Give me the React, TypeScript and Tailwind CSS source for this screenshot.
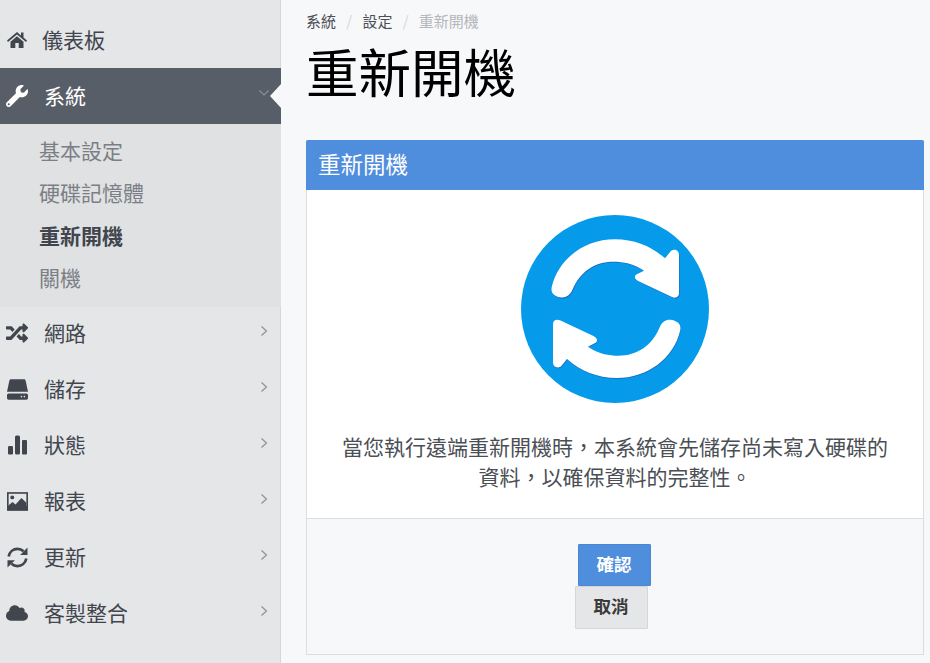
import { ReactNode } from 'react'
import { FaWrench, FaRandom, FaCloud } from 'react-icons/fa'

function HomeIcon() {
  return (
    <svg viewBox="0 0 20 16" className="w-[20px] h-[16px]" fill="currentColor">
      <path d="M10 0 L0 8.5 L1 10 L10 2.5 L19 10 L20 8.5 L16.5 5.5 V0.5 H14 V3.4 Z" />
      <path d="M3.5 9.8 L10 4.2 L16.5 9.8 V16 H11.7 V11 H8.3 V16 H3.5 Z" />
    </svg>
  )
}

function BarsIcon() {
  return (
    <svg viewBox="0 0 22 20" className="w-[22px] h-[20px]" fill="currentColor">
      <rect x="2" y="11" width="5" height="8.5" rx="1.2" />
      <rect x="9" y="0.5" width="5" height="19" rx="1.5" />
      <rect x="16" y="5" width="5" height="14.5" rx="1" />
    </svg>
  )
}

function HddIcon() {
  return (
    <svg viewBox="0 0 64 62" className="w-[21px] h-[21px]" fill="currentColor">
      <path d="M12 0 H52 C55 0 56 2 57 5 L64 38 H0 L7 5 C8 2 9 0 12 0 Z" />
      <rect y="43" width="64" height="19" rx="5" />
      <circle cx="44" cy="52.5" r="2.5" fill="#e5e6e8" />
      <circle cx="53" cy="52.5" r="2.5" fill="#e5e6e8" />
    </svg>
  )
}

function PictureIcon() {
  return (
    <svg viewBox="0 0 64 57" className="w-[21px] h-[19px]" fill="currentColor">
      <rect width="64" height="57" />
      <rect x="5" y="5" width="54" height="37" fill="#e5e6e8" />
      <circle cx="16" cy="16" r="6" />
      <path d="M5 52 V40 L17 30 L26 38 L44 18 L59 32 V52 Z" />
    </svg>
  )
}

function RefreshIcon() {
  return (
    <svg viewBox="0 0 20 20" className="w-[21px] h-[21px]" fill="currentColor">
      <path d="M1.6 9 C2.4 4.6 6 1.8 10 1.8 C12.2 1.8 14.2 2.6 15.8 4" fill="none" stroke="currentColor" strokeWidth="2.6" />
      <path d="M19.5 0.5 V7.5 H12.5 Z" />
      <path d="M18.4 11 C17.6 15.4 14 18.2 10 18.2 C7.8 18.2 5.8 17.4 4.2 16" fill="none" stroke="currentColor" strokeWidth="2.6" />
      <path d="M0.5 19.5 V12.5 H7.5 Z" />
    </svg>
  )
}

function Chevron({ down }: { down?: boolean }) {
  return (
    <svg viewBox="0 0 10 12" className="w-[10px] h-[12px]" fill="none" stroke="currentColor" strokeWidth="1.1">
      {down ? <path d="M0.5 3.5 L5 8 L9.5 3.5" /> : <path d="M2.5 1.5 L7.5 6 L2.5 10.5" />}
    </svg>
  )
}

function NavItem({ icon, label, active, open, plain }: { icon: ReactNode; label: string; active?: boolean; open?: boolean; plain?: boolean }) {
  return (
    <div className={`relative h-[56px] flex items-center pl-[6px] pr-[12px] text-[21px] ${active ? 'bg-[#585e67] text-white' : 'text-[#41454d]'}`}>
      <span className="w-[22px] flex justify-center text-[21px]">{icon}</span>
      <span className={`flex-1 -mt-[1px] ${plain ? 'ml-[14px]' : 'ml-[16px]'}`}>{label}</span>
      {!plain && (
        <span className={active ? '-mt-[6px] text-[#8b9099]' : '-mt-[4px] text-[#8a8d92]'}>
          <Chevron down={open} />
        </span>
      )}
      {active && (
        <span className="absolute right-0 top-[16px] w-0 h-0 border-y-[12px] border-y-transparent border-r-[11px] border-r-[#f7f8fa]" />
      )}
    </div>
  )
}

function SubItem({ label, current }: { label: string; current?: boolean }) {
  return (
    <div className={`h-[42.5px] flex items-center pl-[39px] text-[21px] ${current ? 'font-bold text-[#41454d]' : 'text-[#7b7f85]'}`}>
      {label}
    </div>
  )
}

function RebootLogo() {
  const arrow =
    'M155 262 C175 175 255 118 345 118 C405 118 455 140 495 175 L512 154 C520 146 537 148 537 165 L537 280 C537 292 526 296 516 291 L414 243 C402 236 402 226 412 222 L432 212 C400 190 370 185 340 185 C285 185 240 215 218 268 C210 288 195 295 180 292 C162 288 152 278 155 262 Z'
  return (
    <svg viewBox="63 45 564 564" className="w-[188px] h-[188px]">
      <circle cx="345" cy="327" r="282" fill="#059bea" />
      <g fill="#1e63bd">
        <path d={arrow} transform="translate(1.5 2.5)" />
        <path d={arrow} transform="rotate(180 345 327) translate(-7 0)" />
      </g>
      <g fill="#ffffff">
        <path d={arrow} />
        <path d={arrow} transform="rotate(180 345 327) translate(-6 2)" />
      </g>
    </svg>
  )
}

export default function App() {
  return (
    <div className="flex h-[663px] overflow-hidden bg-[#f7f8fa] font-['Noto_Sans_CJK_TC','Noto_Sans_CJK_SC',sans-serif]">
      {/* Sidebar */}
      <aside className="w-[281px] shrink-0 pt-[12px] bg-[#e5e6e8] shadow-[inset_-1px_0_0_#d5d6d9]">
        <NavItem icon={<HomeIcon />} label="儀表板" plain />
        <NavItem icon={<FaWrench className="text-[22px]" />} label="系統" active open />
        <div className="bg-[#e0e1e3] h-[183px] pt-[5px]">
          <SubItem label="基本設定" />
          <SubItem label="硬碟記憶體" />
          <SubItem label="重新開機" current />
          <SubItem label="關機" />
        </div>
        <div className="-mt-[2px]">
          <NavItem icon={<FaRandom className="text-[22px]" />} label="網路" />
          <NavItem icon={<HddIcon />} label="儲存" />
          <NavItem icon={<BarsIcon />} label="狀態" />
          <NavItem icon={<PictureIcon />} label="報表" />
          <NavItem icon={<RefreshIcon />} label="更新" />
          <NavItem icon={<FaCloud className="text-[22px]" />} label="客製整合" />
        </div>
      </aside>

      {/* Main */}
      <main className="flex-1 pl-[25px] pr-[6px]">
        <div className="h-[42px] flex items-center gap-[10.25px] text-[15px] text-[#4b4f55]">
          <span>系統</span>
          <span className="text-[#d4d6d9]">/</span>
          <span>設定</span>
          <span className="text-[#d4d6d9]">/</span>
          <span className="text-[#b4b6ba]">重新開機</span>
        </div>
        <h1 className="h-[56px] flex items-center text-[52.5px] leading-none text-black">重新開機</h1>

        <section className="mt-[42px] h-[515px] flex flex-col border-x border-b border-[#dcdde0]">
          <div className="-mx-px h-[50px] flex items-center px-[12px] pb-[3px] bg-[#4f8ddd] text-white text-[22.5px] rounded-t-[2px]">
            重新開機
          </div>
          <div className="h-[329px] bg-white flex flex-col items-center pt-[25px] border-b border-[#dcdde0]">
            <RebootLogo />
            <p className="mt-[28px] w-[560px] text-center text-[21px] leading-[30px] text-[#4b4f55]">
              當您執行遠端重新開機時{'\uFF0C'}本系統會先儲存尚未寫入硬碟的
              <br />
              資料{'\uFF0C'}以確保資料的完整性。
            </p>
          </div>
          <div className="flex-1 flex flex-col items-center pt-[25px]">
            <button className="w-[73px] h-[42px] mr-[2px] pb-[2px] bg-[#4f8ddd] border border-[#4a86d4] rounded-[1px] text-white text-[17.5px] font-bold">
              確認
            </button>
            <button className="w-[73px] h-[43px] mr-[8px] pb-[2px] bg-[#e5e6e8] border border-[#d5d6d9] rounded-[1px] text-[#3a3a3a] text-[17.5px] font-bold">
              取消
            </button>
          </div>
        </section>
      </main>
    </div>
  )
}
